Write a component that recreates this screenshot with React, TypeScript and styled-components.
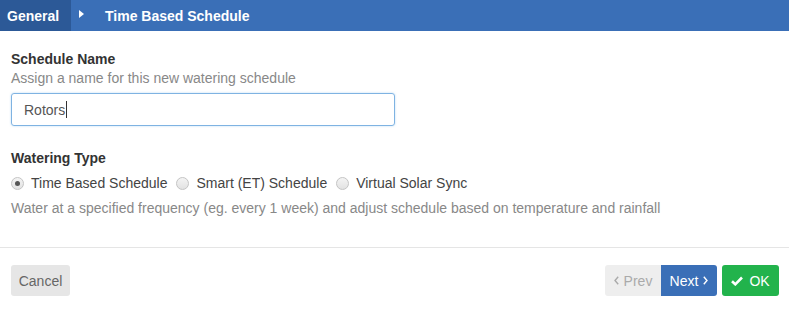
import React from "react";
import styled, { createGlobalStyle } from "styled-components";

const Global = createGlobalStyle`
  html, body { margin: 0; padding: 0; background: #fff; }
  body { font-family: "Liberation Sans", Arial, sans-serif; font-size: 14px; color: #333; }
  * { box-sizing: border-box; }
`;

const Page = styled.div`
  width: 789px;
  height: 309px;
  display: flex;
  flex-direction: column;
`;

const Header = styled.div`
  height: 31px;
  display: flex;
  align-items: stretch;
  background: #3a6fb7;
  color: #fff;
  font-weight: bold;
  font-size: 14px;
`;

const Crumb = styled.div<{ $active?: boolean }>`
  display: flex;
  align-items: center;
  padding: ${(p) => (p.$active ? "0 12px 0 7px" : "0")};
  width: ${(p) => (p.$active ? "71px" : "auto")};
  background: ${(p) => (p.$active ? "#2c5997" : "transparent")};
`;

const Caret = styled.span`
  width: 0;
  height: 0;
  margin: 0 21px 0 8px;
  border-top: 4px solid transparent;
  border-bottom: 4px solid transparent;
  border-left: 5px solid #fff;
  align-self: center;
  position: relative;
  top: -2px;
`;

const Body = styled.div`
  padding: 20px 11px 0 11px;
  display: flex;
  flex-direction: column;
  height: 216px;
`;

const Label = styled.div`
  font-weight: bold;
  font-size: 14px;
  color: #333;
  line-height: 16px;
`;

const Help = styled.div`
  color: #888;
  font-size: 14px;
  line-height: 18px;
  margin-top: 2px;
`;

const Input = styled.div`
  margin-top: 6px;
  width: 384px;
  height: 33px;
  border: 1px solid #7fb3e2;
  border-radius: 3px;
  box-shadow: 0 0 2px rgba(102, 175, 233, 0.5);
  display: flex;
  align-items: center;
  padding-left: 12px;
  color: #555;
  font-size: 14px;
`;

const Cursor = styled.span`
  display: inline-block;
  width: 1px;
  height: 17px;
  background: #333;
  margin-left: 1px;
`;

const Section = styled.div`
  margin-top: 24px;
`;

const RadioRow = styled.div`
  display: flex;
  align-items: center;
  margin-top: 8px;
  height: 18px;
`;

const RadioItem = styled.label`
  display: flex;
  align-items: center;
  color: #444;
  font-size: 14px;
  margin-right: 9px;
`;

const Circle = styled.span<{ $checked?: boolean }>`
  width: 13px;
  height: 13px;
  border-radius: 50%;
  border: 1px solid #c4c4c4;
  background: linear-gradient(#f4f4f4, #e2e2e2);
  margin-right: 7px;
  display: flex;
  align-items: center;
  justify-content: center;
  &::after {
    content: "";
    width: 5px;
    height: 5px;
    border-radius: 50%;
    background: ${(p) => (p.$checked ? "#555" : "transparent")};
  }
`;

const Desc = styled.div`
  color: #888;
  font-size: 14px;
  margin-top: 7px;
  line-height: 18px;
`;

const Footer = styled.div`
  border-top: 1px solid #e5e5e5;
  padding: 17px 10px 0 11px;
  display: flex;
  justify-content: space-between;
  align-items: flex-start;
`;

type Variant = "default" | "disabled" | "primary" | "success";

const Btn = styled.button<{ $variant: Variant; $w: number }>`
  font-family: "Liberation Sans", Arial, sans-serif;
  font-size: 14px;
  height: 31px;
  width: ${(p) => p.$w}px;
  border: none;
  border-radius: 3px;
  padding: 0;
  display: flex;
  align-items: center;
  justify-content: center;
  gap: ${(p) => (p.$variant === "success" ? 6 : 5)}px;
  cursor: pointer;
  background: ${(p) =>
    ({ default: "#e6e6e6", disabled: "#eeeeee", primary: "#3a6fb7", success: "#22b34c" })[p.$variant]};
  color: ${(p) =>
    ({ default: "#666", disabled: "#aaa", primary: "#fff", success: "#fff" })[p.$variant]};
`;

const Group = styled.div`
  display: flex;
  align-items: center;
`;

const Joined = styled.div`
  display: flex;
  & > button:first-child { border-top-right-radius: 0; border-bottom-right-radius: 0; }
  & > button:last-child { border-top-left-radius: 0; border-bottom-left-radius: 0; }
  margin-right: 5px;
`;

const Chevron = ({ dir }: { dir: "left" | "right" }) => (
  <svg width="5" height="9" viewBox="0 0 5 9">
    <path
      d={dir === "left" ? "M4.2 0.8 L1 4.5 L4.2 8.2" : "M0.8 0.8 L4 4.5 L0.8 8.2"}
      fill="none"
      stroke="currentColor"
      strokeWidth="1.4"
    />
  </svg>
);

const Check = () => (
  <svg width="12" height="10" viewBox="0 0 12 10">
    <path d="M1 5.2 L4.3 8.3 L11 1.5" fill="none" stroke="currentColor" strokeWidth="2.6" />
  </svg>
);

export default function App() {
  return (
    <Page>
      <Global />
      <Header>
        <Crumb $active>General</Crumb>
        <Caret />
        <Crumb>Time Based Schedule</Crumb>
      </Header>
      <Body>
        <Label>Schedule Name</Label>
        <Help>Assign a name for this new watering schedule</Help>
        <Input>
          Rotors
          <Cursor />
        </Input>
        <Section>
          <Label>Watering Type</Label>
          <RadioRow>
            <RadioItem>
              <Circle $checked />
              Time Based Schedule
            </RadioItem>
            <RadioItem>
              <Circle />
              Smart (ET) Schedule
            </RadioItem>
            <RadioItem>
              <Circle />
              Virtual Solar Sync
            </RadioItem>
          </RadioRow>
          <Desc>
            Water at a specified frequency (eg. every 1 week) and adjust schedule based on temperature and rainfall
          </Desc>
        </Section>
      </Body>
      <Footer>
        <Btn $variant="default" $w={59}>Cancel</Btn>
        <Group>
          <Joined>
            <Btn $variant="disabled" $w={56}>
              <Chevron dir="left" /> Prev
            </Btn>
            <Btn $variant="primary" $w={56}>
              Next <Chevron dir="right" />
            </Btn>
          </Joined>
          <Btn $variant="success" $w={57}>
            <Check /> OK
          </Btn>
        </Group>
      </Footer>
    </Page>
  );
}
